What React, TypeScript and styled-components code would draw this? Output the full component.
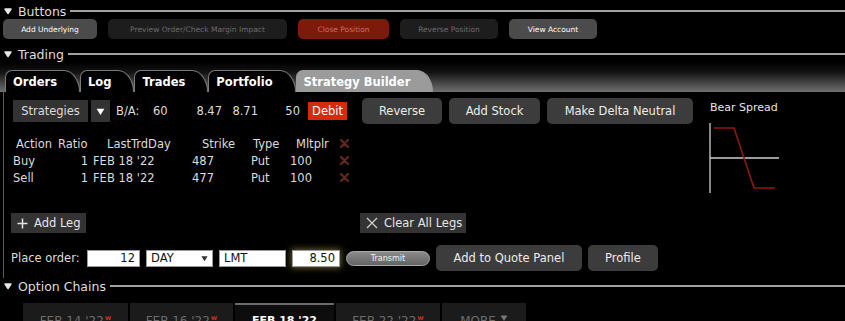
import React from 'react';
import styled, { createGlobalStyle } from 'styled-components';

const GlobalStyle = createGlobalStyle`
  html, body {
    margin: 0;
    padding: 0;
    background: #000;
  }
  body {
    font-family: "DejaVu Sans", Verdana, sans-serif;
    color: #e0e0e0;
    overflow: hidden;
  }
`;

type TopVariant = 'light' | 'dim' | 'danger';

const topColors: Record<TopVariant, { bg: string; fg: string }> = {
  light: { bg: '#4b4b4b', fg: '#ffffff' },
  dim: { bg: '#1d1d1d', fg: '#6c6c6c' },
  danger: { bg: '#7c1a0b', fg: '#c9705f' },
};

const Collapse = () => (
  <svg width="8" height="8" viewBox="0 0 8 8">
    <path d="M1 2 L7 2 L4 6.5 Z" fill="#e8e8e8" stroke="#e8e8e8" strokeWidth="1.4" strokeLinejoin="round" />
  </svg>
);

const Section = ({ title }: { title: string }) => (
  <SectionHeader>
    <Collapse />
    <SectionTitle>{title}</SectionTitle>
    <SectionLine />
  </SectionHeader>
);

const XMark = () => (
  <svg width="9" height="9" viewBox="0 0 9 9">
    <path d="M1 1 L8 8 M8 1 L1 8" stroke="#a5443299" strokeWidth="2.2" strokeLinecap="round" />
  </svg>
);

const PlusIcon = () => (
  <svg width="11" height="11" viewBox="0 0 11 11">
    <path d="M5.5 0.5 V10.5 M0.5 5.5 H10.5" stroke="#e4e4e4" strokeWidth="1.5" />
  </svg>
);

const CloseIcon = () => (
  <svg width="12" height="12" viewBox="0 0 12 12">
    <path d="M1 1 L11 11 M11 1 L1 11" stroke="#cfcfcf" strokeWidth="1.3" />
  </svg>
);

const DownTri = ({ size = 8, color = '#fff' }: { size?: number; color?: string }) => (
  <svg width={size} height={size} viewBox="0 0 8 8">
    <path d="M0.5 1.5 L7.5 1.5 L4 7 Z" fill={color} />
  </svg>
);

const BearChart = () => (
  <svg width="80" height="78" viewBox="0 0 80 78">
    <line x1="2" y1="3" x2="2" y2="73" stroke="#cfcfcf" strokeWidth="1.3" />
    <line x1="2" y1="38" x2="71" y2="38" stroke="#cfcfcf" strokeWidth="1.3" />
    <polyline points="6,8 26,8 46,68 67,68" fill="none" stroke="#8e1a0e" strokeWidth="1.6" />
  </svg>
);

const legs = [
  { action: 'Buy', ratio: '1', day: "FEB 18 '22", strike: '487', type: 'Put', mult: '100' },
  { action: 'Sell', ratio: '1', day: "FEB 18 '22", strike: '477', type: 'Put', mult: '100' },
];

const tabs = ['Orders', 'Log', 'Trades', 'Portfolio', 'Strategy Builder'];

const dates = [
  { label: "FEB 14 '22", w: 105, weekly: true },
  { label: "FEB 16 '22", w: 103, weekly: true },
  { label: "FEB 18 '22", w: 99, active: true },
  { label: "FEB 22 '22", w: 104, weekly: true },
];

export default function App() {
  return (
    <Page>
      <GlobalStyle />
      <TopSection>
        <Section title="Buttons" />
      </TopSection>
      <TopButtonRow>
        <TopButton $variant="light" $w={94}>Add Underlying</TopButton>
        <TopButton $variant="dim" $w={179}>Preview Order/Check Margin Impact</TopButton>
        <TopButton $variant="danger" $w={91}>Close Position</TopButton>
        <TopButton $variant="dim" $w={98}>Reverse Position</TopButton>
        <TopButton $variant="light" $w={88}>View Account</TopButton>
      </TopButtonRow>

      <TradingSection>
        <Section title="Trading" />
      </TradingSection>
      <TabBar>
        {tabs.map((t) => (
          <Tab key={t} $active={t === 'Strategy Builder'}>{t}</Tab>
        ))}
      </TabBar>

      <Content>
        <MainCol>
          <StrategyRow>
            <DarkButton $w={75}>Strategies</DarkButton>
            <DropButton>
              <DownTri size={9} />
            </DropButton>
            <QuoteLabel>B/A:</QuoteLabel>
            <Num $w={30}>60</Num>
            <Num $w={39} $right>8.47</Num>
            <Num $w={36} $right>8.71</Num>
            <Num $w={42} $right>50</Num>
            <Debit>Debit</Debit>
            <ActionGroup>
              <ActionButton $w={80}>Reverse</ActionButton>
              <ActionButton $w={91}>Add Stock</ActionButton>
              <ActionButton $w={146}>Make Delta Neutral</ActionButton>
            </ActionGroup>
          </StrategyRow>

          <LegTable>
            <Cell $pl={3}>Action</Cell>
            <Cell>Ratio</Cell>
            <Cell $pl={17}>LastTrdDay</Cell>
            <Cell $pl={12}>Strike</Cell>
            <Cell $pl={3}>Type</Cell>
            <Cell $pl={6}>Mltplr</Cell>
            <Cell><XMark /></Cell>
            {legs.map((l) => (
              <React.Fragment key={l.action}>
                <Cell>{l.action}</Cell>
                <Cell $right>{l.ratio}</Cell>
                <Cell $pl={3}>{l.day}</Cell>
                <Cell $pl={2}>{l.strike}</Cell>
                <Cell $pl={1}>{l.type}</Cell>
                <Cell>{l.mult}</Cell>
                <Cell><XMark /></Cell>
              </React.Fragment>
            ))}
          </LegTable>

          <LegRow>
            <LegButton $w={75}>
              <PlusIcon />
              Add Leg
            </LegButton>
            <LegButton $w={106}>
              <CloseIcon />
              Clear All Legs
            </LegButton>
          </LegRow>

          <OrderRow>
            <OrderLabel>Place order:</OrderLabel>
            <Field $w={53} $right>12</Field>
            <Field $w={67}>
              DAY
              <DownTri size={7} color="#333" />
            </Field>
            <Field $w={67}>LMT</Field>
            <Field $w={48} $right $glow>8.50</Field>
            <Transmit>Transmit</Transmit>
            <ActionButton $w={146}>Add to Quote Panel</ActionButton>
            <ActionButton $w={70}>Profile</ActionButton>
          </OrderRow>
        </MainCol>

        <ChartCol>
          <ChartTitle>Bear Spread</ChartTitle>
          <BearChart />
        </ChartCol>
      </Content>

      <Section title="Option Chains" />
      <DateTabs>
        {dates.map((d) => (
          <DateTab key={d.label} $w={d.w} $active={d.active}>
            {d.label}
            {d.weekly && <Weekly>w</Weekly>}
          </DateTab>
        ))}
        <DateTab $w={84}>
          MORE <DownTri size={8} color="#777" />
        </DateTab>
      </DateTabs>
    </Page>
  );
}

const Page = styled.div`
  width: 845px;
  height: 321px;
  overflow: hidden;
  display: flex;
  flex-direction: column;
  & > * {
    flex-shrink: 0;
  }
`;

const SectionHeader = styled.div`
  display: flex;
  align-items: center;
  height: 16px;
  padding-left: 4px;
`;

const SectionTitle = styled.span`
  margin-left: 6px;
  font-size: 12.5px;
  color: #dedede;
  white-space: nowrap;
`;

const SectionLine = styled.div`
  flex: 1;
  height: 2px;
  margin-left: 4px;
  background: #a2a2a2;
`;

const TopSection = styled.div`
  margin-top: 3px;
`;

const TradingSection = styled.div`
  margin-top: 7px;
`;

const TopButtonRow = styled.div`
  display: flex;
  gap: 11px;
  height: 20px;
  padding-left: 3px;
`;

const TopButton = styled.div<{ $variant: TopVariant; $w: number }>`
  width: ${(p) => p.$w}px;
  height: 20px;
  border-radius: 5px;
  display: flex;
  align-items: center;
  justify-content: center;
  font-size: 7.5px;
  white-space: nowrap;
  background: ${(p) => topColors[p.$variant].bg};
  color: ${(p) => topColors[p.$variant].fg};
`;

const TabBar = styled.div`
  height: 30px;
  display: flex;
  align-items: flex-end;
  padding-left: 5px;
  background: linear-gradient(#000 0%, #141414 35%, #707070 100%);
`;

const Tab = styled.div<{ $active?: boolean }>`
  box-sizing: border-box;
  height: 22px;
  padding: 0 22px 0 7px;
  display: flex;
  align-items: center;
  font-size: 11.5px;
  font-weight: bold;
  color: #fff;
  white-space: nowrap;
  background: ${(p) => (p.$active ? '#9b9b9b' : '#000')};
  border: 1px solid ${(p) => (p.$active ? '#9b9b9b' : '#7a7a7a')};
  border-bottom: none;
  border-radius: 7px 16px 0 0 / 7px 22px 0 0;
`;

const Content = styled.div`
  margin-left: 3px;
  border-left: 1px solid #5a5a5a;
  height: 186px;
  display: flex;
  padding-left: 7px;
  font-size: 11.5px;
  color: #dcdcdc;
`;

const MainCol = styled.div`
  width: 697px;
  display: flex;
  flex-direction: column;
`;

const ChartCol = styled.div`
  padding-top: 6px;
  display: flex;
  flex-direction: column;
`;

const ChartTitle = styled.div`
  padding-left: 2px;
  height: 22px;
  line-height: 20px;
  font-size: 11px;
  color: #e6e6e6;
`;

const StrategyRow = styled.div`
  margin-top: 6px;
  height: 26px;
  display: flex;
  align-items: center;
  padding-left: 2px;
`;

const DarkButton = styled.div<{ $w: number }>`
  width: ${(p) => p.$w}px;
  height: 22px;
  background: #333;
  display: flex;
  align-items: center;
  justify-content: center;
  color: #dcdcdc;
`;

const DropButton = styled.div`
  width: 19px;
  height: 22px;
  margin-left: 3px;
  background: #333;
  display: flex;
  align-items: center;
  justify-content: center;
`;

const QuoteLabel = styled.span`
  width: 37px;
  margin-left: 6px;
`;

const Num = styled.span<{ $w: number; $right?: boolean }>`
  width: ${(p) => p.$w}px;
  text-align: ${(p) => (p.$right ? 'right' : 'left')};
`;

const Debit = styled.span`
  margin-left: 8px;
  width: 39px;
  height: 18px;
  background: #d8290f;
  color: #fff;
  display: flex;
  align-items: center;
  justify-content: center;
`;

const ActionGroup = styled.div`
  margin-left: 15px;
  display: flex;
  gap: 7px;
`;

const ActionButton = styled.div<{ $w: number }>`
  width: ${(p) => p.$w}px;
  height: 26px;
  border-radius: 5px;
  background: #3c3c3c;
  color: #ececec;
  font-size: 11.5px;
  display: flex;
  align-items: center;
  justify-content: center;
  white-space: nowrap;
`;

const LegTable = styled.div`
  margin-top: 11px;
  padding-left: 2px;
  display: grid;
  grid-template-columns: 45px 32px 100px 60px 40px 50px 20px;
  grid-auto-rows: 17px;
  align-items: center;
`;

const Cell = styled.div<{ $pl?: number; $right?: boolean }>`
  padding-left: ${(p) => p.$pl ?? 0}px;
  padding-right: ${(p) => (p.$right ? 2 : 0)}px;
  white-space: nowrap;
  display: flex;
  justify-content: ${(p) => (p.$right ? 'flex-end' : 'flex-start')};
`;

const LegRow = styled.div`
  margin-top: 27px;
  width: 455px;
  height: 20px;
  display: flex;
  justify-content: space-between;
`;

const LegButton = styled.div<{ $w: number }>`
  width: ${(p) => p.$w}px;
  box-sizing: border-box;
  height: 20px;
  padding-left: 6px;
  background: #333;
  color: #e6e6e6;
  display: flex;
  align-items: center;
  gap: 6px;
  white-space: nowrap;
`;

const OrderRow = styled.div`
  margin-top: 12px;
  height: 26px;
  display: flex;
  align-items: center;
  gap: 6px;
`;

const OrderLabel = styled.span`
  width: 70px;
  white-space: nowrap;
`;

const Field = styled.div<{ $w: number; $right?: boolean; $glow?: boolean }>`
  width: ${(p) => p.$w}px;
  height: 17px;
  box-sizing: border-box;
  padding: 0 4px;
  background: #fff;
  color: #111;
  border: 1px solid #9a9a9a;
  display: flex;
  align-items: center;
  justify-content: ${(p) => (p.$right ? 'flex-end' : 'space-between')};
  box-shadow: ${(p) => (p.$glow ? '0 0 6px 1px rgba(190, 170, 90, 0.55)' : 'none')};
`;

const Transmit = styled.div`
  width: 84px;
  height: 15px;
  box-sizing: border-box;
  border-radius: 8px;
  border: 1px solid #a8a8a8;
  background: linear-gradient(#8a8a8a, #646464);
  color: #f0f0f0;
  font-size: 8px;
  display: flex;
  align-items: center;
  justify-content: center;
`;

const DateTabs = styled.div`
  margin-top: 9px;
  padding-left: 23px;
  display: flex;
  gap: 2px;
`;

const DateTab = styled.div<{ $w: number; $active?: boolean }>`
  width: ${(p) => p.$w}px;
  height: 28px;
  box-sizing: border-box;
  padding-top: ${(p) => (p.$active ? 9 : 11)}px;
  display: flex;
  justify-content: center;
  align-items: flex-start;
  gap: 4px;
  background: ${(p) => (p.$active ? '#0d0d0d' : '#1b1b1b')};
  border-top: ${(p) => (p.$active ? '2px solid #6a6a6a' : 'none')};
  color: ${(p) => (p.$active ? '#fff' : '#6c6c6c')};
  font-size: ${(p) => (p.$active ? 11 : 12)}px;
  font-weight: ${(p) => (p.$active ? 'bold' : 'normal')};
  white-space: nowrap;
`;

const Weekly = styled.span`
  margin-left: -3px;
  font-size: 7px;
  font-weight: bold;
  color: #c2311e;
`;
